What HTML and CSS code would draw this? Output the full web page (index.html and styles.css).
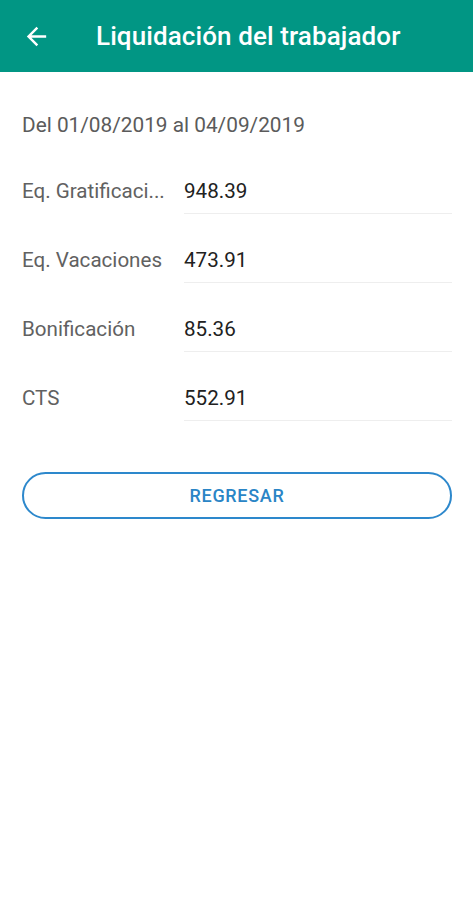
FILE: index.html
```html
<!DOCTYPE html>
<html lang="es">
<head>
<meta charset="utf-8">
<title>Liquidación del trabajador</title>
<link rel="stylesheet" href="styles.css">
</head>
<body>
<header class="appbar">
  <svg class="back" viewBox="0 0 24 24" width="29" height="29" aria-hidden="true">
    <path d="M20 11H7.83l5.59-5.59L12 4l-8 8 8 8 1.41-1.41L7.83 13H20v-2z" fill="#fff"/>
  </svg>
  <h1 class="title">Liquidación del trabajador</h1>
</header>
<main class="content">
  <p class="period">Del 01/08/2019 al 04/09/2019</p>
  <div class="rows">
    <div class="row"><span class="label">Eq. Gratificaci...</span><span class="value">948.39</span></div>
    <div class="row"><span class="label">Eq. Vacaciones</span><span class="value">473.91</span></div>
    <div class="row"><span class="label">Bonificación</span><span class="value">85.36</span></div>
    <div class="row"><span class="label">CTS</span><span class="value">552.91</span></div>
  </div>
  <button class="btn">REGRESAR</button>
</main>
</body>
</html>
```
FILE: styles.css
```css
* { box-sizing: border-box; }
html, body { margin: 0; padding: 0; background: #fff; }
body { font-family: Roboto, "Noto Sans", sans-serif; width: 473px; }

.appbar {
  height: 72px;
  background: #019684;
  display: flex;
  align-items: center;
  padding-left: 22px;
}
.back { flex: none; }
.title {
  margin: 0 0 0 45px;
  color: #fff;
  font-size: 26px;
  font-weight: 500;
  letter-spacing: 0.1px;
}

.content { padding: 0 21px 0 22px; }
.period {
  margin: 0;
  padding-top: 41px;
  font-size: 20.8px;
  color: #5b5b5b;
  line-height: 24px;
}

.rows { margin-top: 24px; }
.row {
  display: flex;
  align-items: flex-start;
  height: 69px;
}
.label {
  width: 162px;
  flex: none;
  font-size: 20.6px;
  color: #616161;
  padding-top: 18px;
  line-height: 24px;
  white-space: nowrap;
}
.value {
  flex: 1;
  font-size: 20.6px;
  color: #212121;
  line-height: 24px;
  padding-top: 18px;
  height: 53px;
  border-bottom: 1px solid #eeeeee;
}

.btn {
  display: block;
  width: 100%;
  margin-top: 35px;
  height: 47px;
  border: 2px solid #2d88cc;
  border-radius: 24px;
  background: #fff;
  color: #2a85c6;
  font-family: Roboto, sans-serif;
  font-size: 18px;
  font-weight: 500;
  letter-spacing: 0.7px;
}
```
